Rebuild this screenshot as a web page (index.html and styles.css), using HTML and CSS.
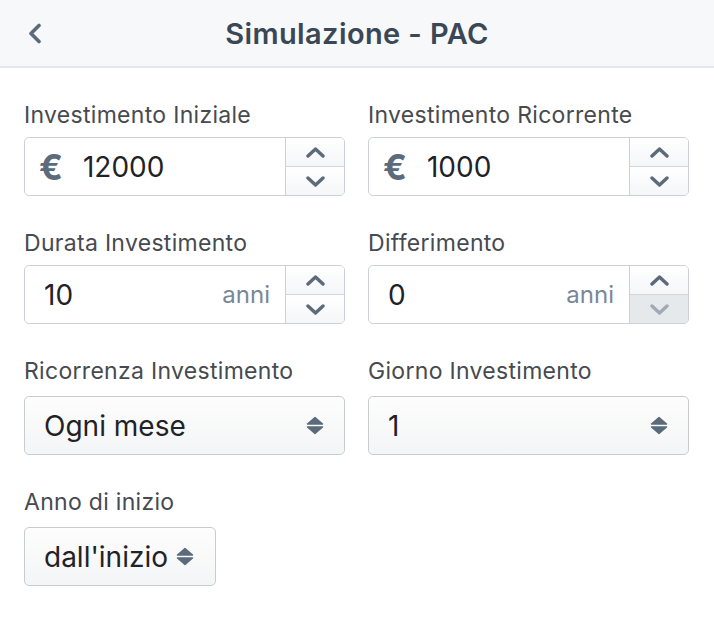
FILE: index.html
```html
<!DOCTYPE html>
<html lang="it">
<head>
    <meta charset="UTF-8">
    <meta name="viewport" content="width=device-width, initial-scale=1.0">
    <title>Simulazione - PAC</title>
    <link rel="stylesheet" href="styles.css">
</head>
<body>

<header class="topbar">
    <button class="back" aria-label="Indietro">
        <svg width="14" height="21" viewBox="0 0 14 21"><polyline points="11,2.5 3,10.5 11,18.5" fill="none" stroke="currentColor" stroke-width="3.6" stroke-linecap="round" stroke-linejoin="round"/></svg>
    </button>
    <h1 class="title">Simulazione - PAC</h1>
    <span></span>
</header>

<main class="form">
    <div class="field">
        <label class="field-label">Investimento Iniziale</label>
        <div class="spin">
            <div class="spin-box">
                <span class="prefix">€</span>
                <input class="spin-input" type="text" value="12000">
            </div>
            <div class="spin-buttons">
                <button class="spin-btn"><svg width="19" height="11" viewBox="0 0 19 11"><polyline points="2,9 9.5,2 17,9"/></svg></button>
                <button class="spin-btn"><svg width="19" height="11" viewBox="0 0 19 11"><polyline points="2,2 9.5,9 17,2"/></svg></button>
            </div>
        </div>
    </div>

    <div class="field">
        <label class="field-label">Investimento Ricorrente</label>
        <div class="spin">
            <div class="spin-box">
                <span class="prefix">€</span>
                <input class="spin-input" type="text" value="1000">
            </div>
            <div class="spin-buttons">
                <button class="spin-btn"><svg width="19" height="11" viewBox="0 0 19 11"><polyline points="2,9 9.5,2 17,9"/></svg></button>
                <button class="spin-btn"><svg width="19" height="11" viewBox="0 0 19 11"><polyline points="2,2 9.5,9 17,2"/></svg></button>
            </div>
        </div>
    </div>

    <div class="field">
        <label class="field-label">Durata Investimento</label>
        <div class="spin">
            <div class="spin-box">
                <input class="spin-input plain" type="text" value="10">
                <span class="suffix">anni</span>
            </div>
            <div class="spin-buttons">
                <button class="spin-btn"><svg width="19" height="11" viewBox="0 0 19 11"><polyline points="2,9 9.5,2 17,9"/></svg></button>
                <button class="spin-btn"><svg width="19" height="11" viewBox="0 0 19 11"><polyline points="2,2 9.5,9 17,2"/></svg></button>
            </div>
        </div>
    </div>

    <div class="field">
        <label class="field-label">Differimento</label>
        <div class="spin">
            <div class="spin-box">
                <input class="spin-input plain" type="text" value="0">
                <span class="suffix">anni</span>
            </div>
            <div class="spin-buttons">
                <button class="spin-btn"><svg width="19" height="11" viewBox="0 0 19 11"><polyline points="2,9 9.5,2 17,9"/></svg></button>
                <button class="spin-btn" disabled><svg width="19" height="11" viewBox="0 0 19 11"><polyline points="2,2 9.5,9 17,2"/></svg></button>
            </div>
        </div>
    </div>

    <div class="field">
        <label class="field-label select-label">Ricorrenza Investimento</label>
        <div class="select">
            <span class="select-text">Ogni mese</span>
            <svg class="select-arrows" width="18" height="19" viewBox="0 0 18 19"><path d="M9 1.5 L16.5 8 L1.5 8 Z"/><path d="M1.5 11 L16.5 11 L9 17.5 Z"/></svg>
        </div>
    </div>

    <div class="field">
        <label class="field-label select-label">Giorno Investimento</label>
        <div class="select">
            <span class="select-text">1</span>
            <svg class="select-arrows" width="18" height="19" viewBox="0 0 18 19"><path d="M9 1.5 L16.5 8 L1.5 8 Z"/><path d="M1.5 11 L16.5 11 L9 17.5 Z"/></svg>
        </div>
    </div>

    <div class="field">
        <label class="field-label select-label">Anno di inizio</label>
        <div class="select compact">
            <span class="select-text">dall'inizio</span>
            <svg class="select-arrows" width="18" height="19" viewBox="0 0 18 19"><path d="M9 1.5 L16.5 8 L1.5 8 Z"/><path d="M1.5 11 L16.5 11 L9 17.5 Z"/></svg>
        </div>
    </div>
</main>

</body>
</html>
```

FILE: styles.css
```css
body {
    margin: 0;
    font-family: Inter, "Noto Sans", sans-serif;
    background-color: #ffffff;
    color: #222831;
}
.topbar {
    display: grid;
    grid-template-columns: 1fr auto 1fr;
    align-items: center;
    height: 66px;
    padding: 0 20px;
    background-color: #f7f8fa;
    border-bottom: 2px solid #e3e7eb;
}
.back {
    justify-self: start;
    display: flex;
    padding: 4px 8px;
    border: none;
    background: none;
    color: #5b6b7b;
    cursor: pointer;
}
.title {
    margin: 0;
    font-size: 29px;
    font-weight: 600;
    letter-spacing: 0.4px;
    color: #3a4756;
}
.form {
    display: grid;
    grid-template-columns: minmax(0, 1fr) minmax(0, 1fr);
    column-gap: 23px;
    row-gap: 35px;
    padding: 35px 25px 0 24px;
}
.field {
    display: flex;
    flex-direction: column;
    align-items: flex-start;
    min-width: 0;
}
.field-label {
    font-size: 23px;
    line-height: 24px;
    letter-spacing: 0.3px;
    color: #474a4f;
    margin-bottom: 10px;
}
.select-label {
    margin-bottom: 13px;
}
.spin {
    display: flex;
    align-self: stretch;
    height: 59px;
    box-sizing: border-box;
    border: 1px solid #cdd0d4;
    border-radius: 5px;
    overflow: hidden;
}
.spin-box {
    flex: 1;
    display: flex;
    align-items: center;
    padding: 0 15px 0 14px;
    min-width: 0;
}
.prefix {
    font-size: 35px;
    font-weight: 700;
    color: #5b6b7b;
    margin-right: 20px;
}
.spin-input {
    flex: 1;
    width: 0;
    min-width: 0;
    border: none;
    outline: none;
    padding: 0;
    font-family: Inter, "Noto Sans", sans-serif;
    font-size: 28px;
    color: #1f2328;
    background: none;
}
.spin-input.plain {
    padding-left: 5px;
}
.suffix {
    font-size: 24px;
    color: #788898;
}
.spin-buttons {
    display: flex;
    flex-direction: column;
    width: 58px;
    border-left: 1px solid #cdd0d4;
}
.spin-btn {
    flex: 1;
    display: flex;
    align-items: center;
    justify-content: center;
    padding: 0;
    border: none;
    background: linear-gradient(#ffffff, #f5f6f8);
    color: #5b6b7b;
    cursor: pointer;
}
.spin-btn + .spin-btn {
    border-top: 1px solid #d3d7db;
}
.spin-btn svg polyline {
    fill: none;
    stroke: currentColor;
    stroke-width: 3.4;
    stroke-linecap: round;
    stroke-linejoin: round;
}
.spin-btn:disabled {
    background: #e6e9ec;
    color: #a0aab4;
    cursor: default;
}
.select {
    display: flex;
    align-items: center;
    justify-content: space-between;
    align-self: stretch;
    height: 59px;
    box-sizing: border-box;
    padding: 0 20px 0 19px;
    border: 1px solid #c9cccf;
    border-radius: 5px;
    background: linear-gradient(#fdfdfd, #f4f5f6);
    cursor: pointer;
}
.select.compact {
    align-self: flex-start;
    gap: 8px;
    padding-right: 21px;
}
.select-text {
    font-size: 28px;
    color: #1f2328;
}
.select-arrows path {
    fill: #5b6b7b;
    stroke: #5b6b7b;
    stroke-width: 1.5;
    stroke-linejoin: round;
}
```
